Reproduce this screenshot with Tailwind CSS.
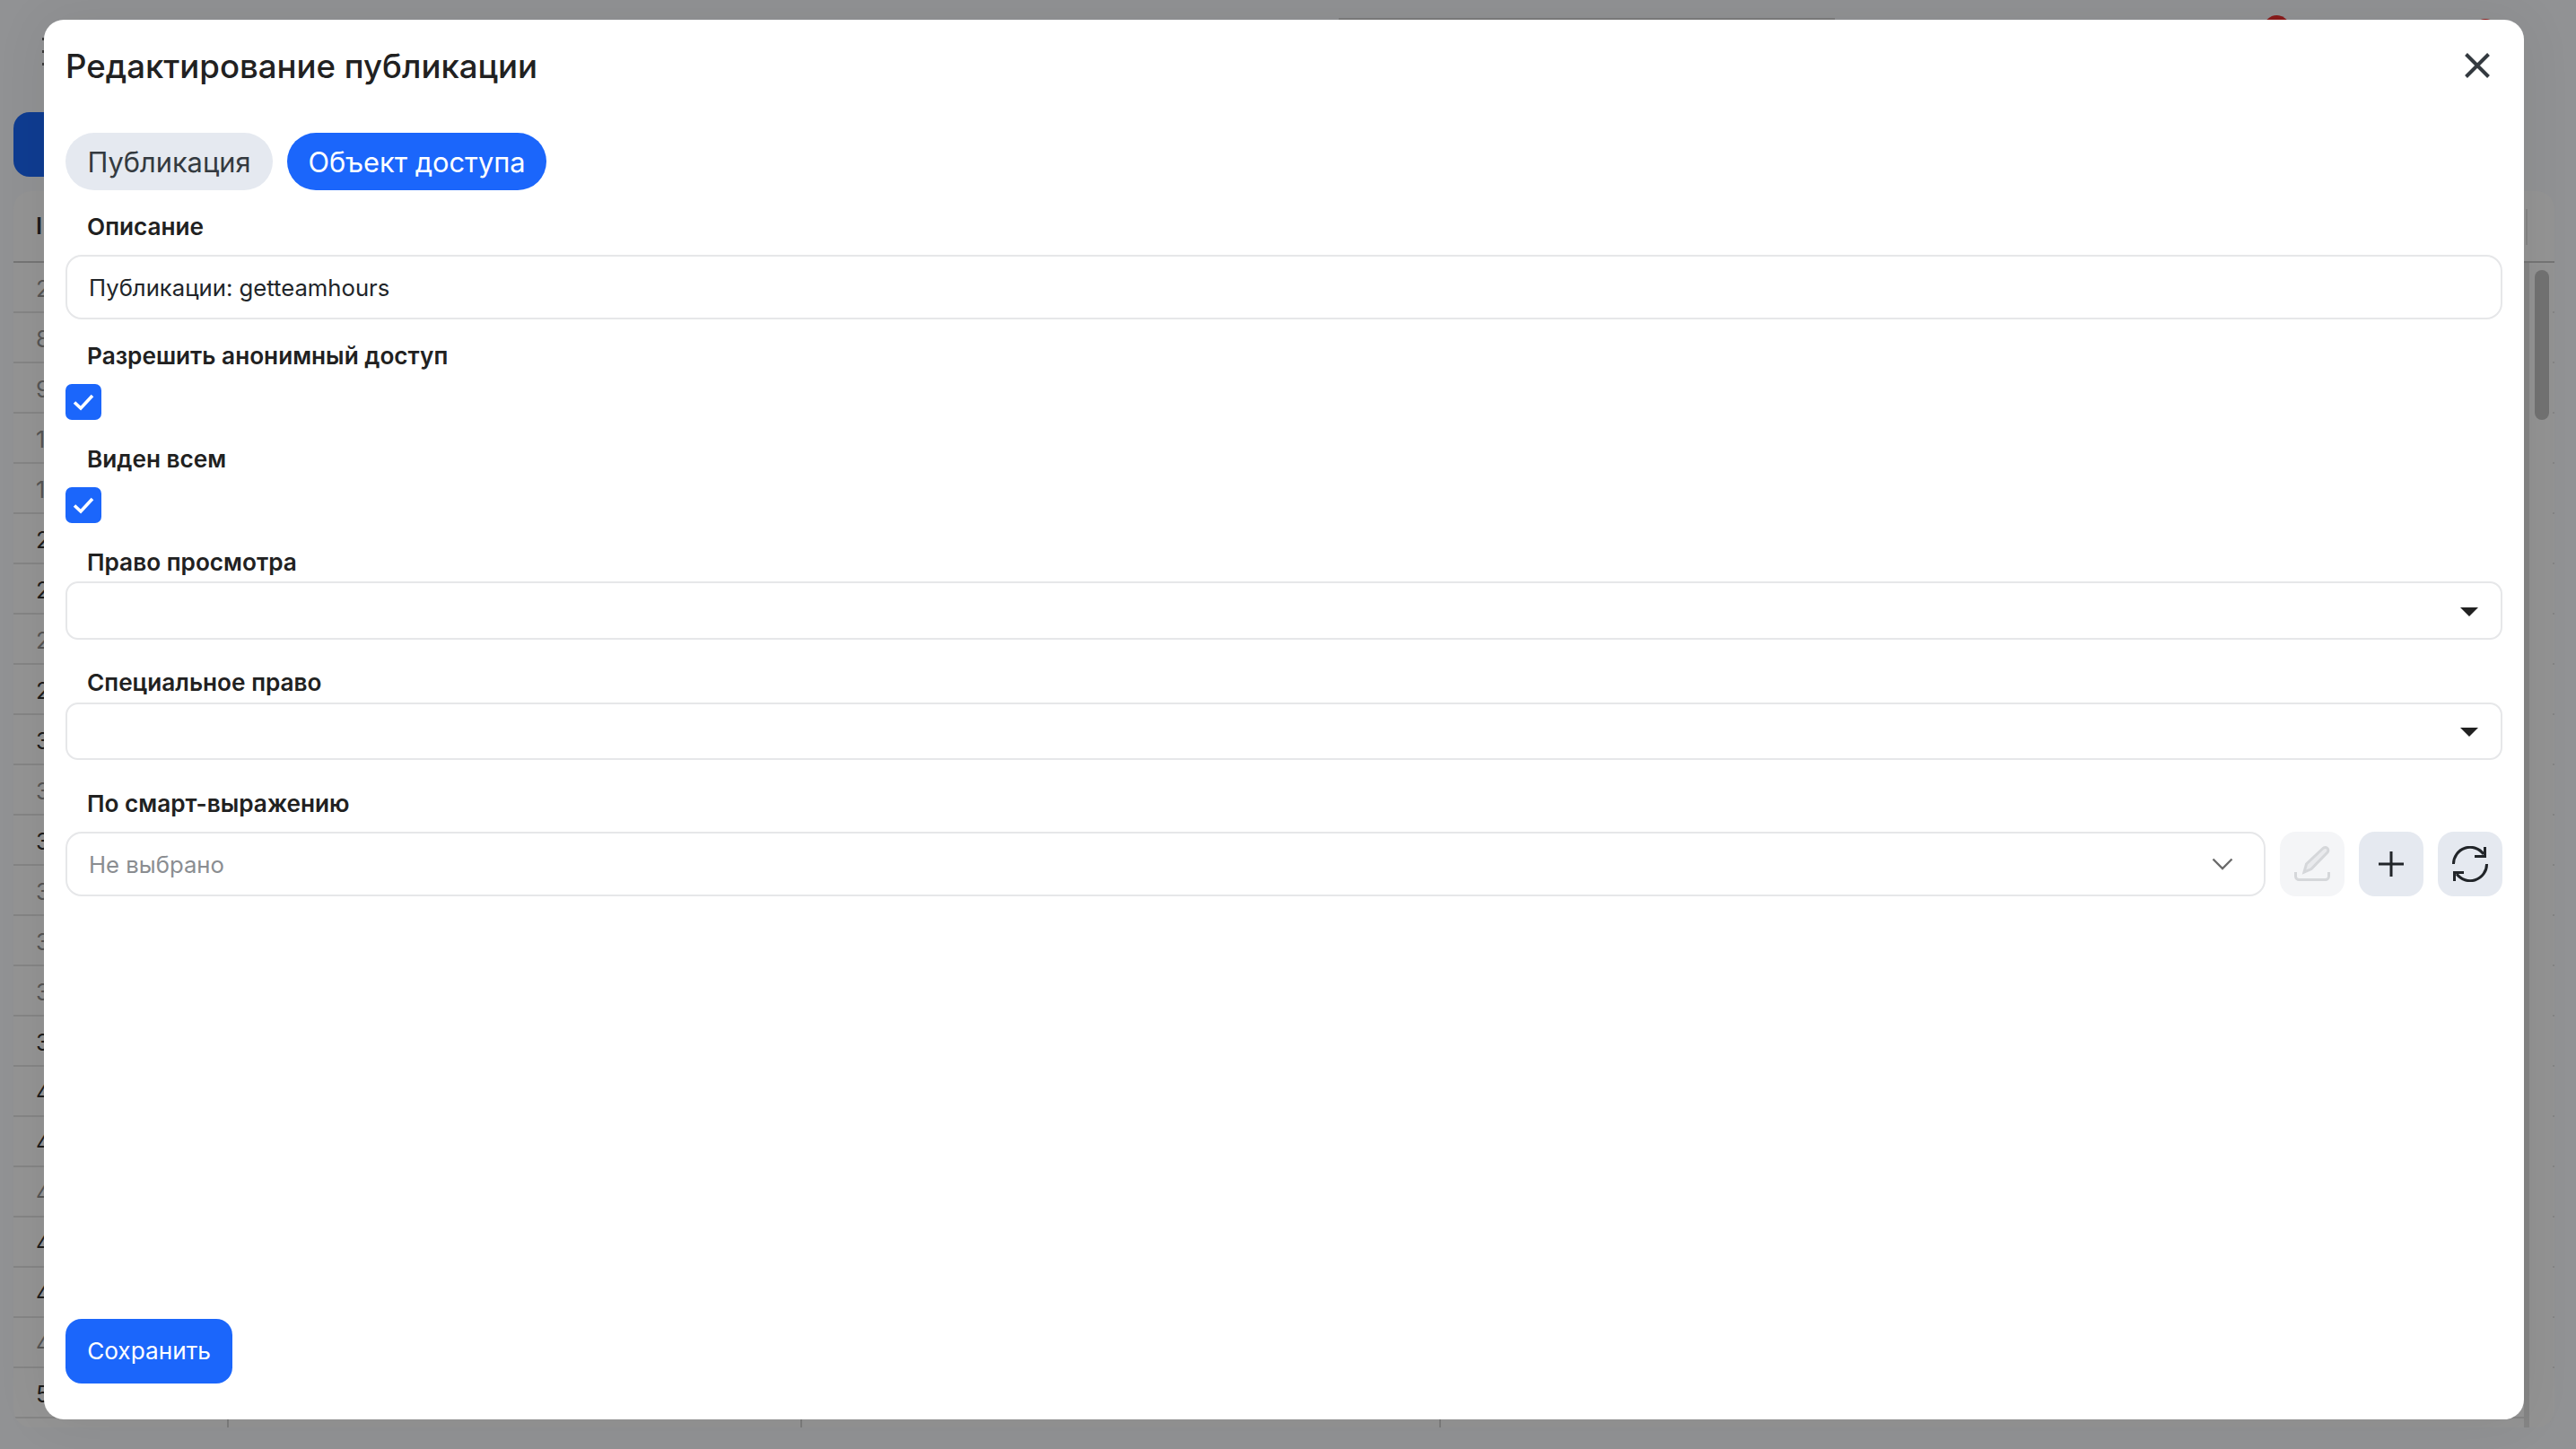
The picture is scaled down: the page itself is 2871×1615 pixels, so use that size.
<!DOCTYPE html>
<html lang="ru">
<head>
<meta charset="utf-8">
<title>Редактирование публикации</title>
<script src="https://cdn.jsdelivr.net/npm/@tailwindcss/browser@4"></script>
</head>
<body class="m-0 overflow-hidden font-['Inter','Noto_Sans',sans-serif]">
<div class="relative w-[2871px] h-[1615px] overflow-hidden bg-[#919294]">
  <!-- dimmed page behind the dialog -->
  <div class="absolute left-[1492px] top-[20px] w-[553px] h-[2px] bg-[#7c7c7c]"></div>
  <div class="absolute left-[2523px] top-[17px] w-[29px] h-[29px] rounded-full bg-[#8a1a1a]"></div>
  <div class="absolute left-[2756px] top-[21px] w-[28px] h-[28px] rounded-full bg-[#8a1a1a]"></div>
  <div class="absolute left-[47px] top-[42px] flex flex-col gap-[11px]">
    <span class="block w-[3px] h-[3px] bg-[#3a3a3a]"></span>
    <span class="block w-[3px] h-[3px] bg-[#3a3a3a]"></span>
    <span class="block w-[3px] h-[3px] bg-[#3a3a3a]"></span>
  </div>
  <div class="absolute left-[15px] top-[125px] w-[60px] h-[72px] rounded-[18px] bg-[#0f3c91]"></div>

  <div class="absolute left-[15px] top-[213px] w-[2832px] h-[1378px] rounded-[20px] bg-[#949494] overflow-hidden text-[25.6px] leading-[32px]">
    <div class="h-[80px] border-b-2 border-[#757575] pl-[25px] flex items-center font-semibold text-[#1c1c1c]">I</div>
    <div class="flex flex-col">
      <div class="h-[56px] border-b-2 border-[#858585] pl-[25px] pt-[3px] flex items-center text-[#555]">2</div>
      <div class="h-[56px] border-b-2 border-[#858585] pl-[25px] pt-[3px] flex items-center text-[#555]">8</div>
      <div class="h-[56px] border-b-2 border-[#858585] pl-[25px] pt-[3px] flex items-center text-[#555]">9</div>
      <div class="h-[56px] border-b-2 border-[#858585] pl-[25px] pt-[3px] flex items-center text-[#555]">1</div>
      <div class="h-[56px] border-b-2 border-[#858585] pl-[25px] pt-[3px] flex items-center text-[#555]">1</div>
      <div class="h-[56px] border-b-2 border-[#858585] pl-[25px] pt-[3px] flex items-center text-[#1c1c1c]">2</div>
      <div class="h-[56px] border-b-2 border-[#858585] pl-[25px] pt-[3px] flex items-center text-[#1c1c1c]">2</div>
      <div class="h-[56px] border-b-2 border-[#858585] pl-[25px] pt-[3px] flex items-center text-[#555]">2</div>
      <div class="h-[56px] border-b-2 border-[#858585] pl-[25px] pt-[3px] flex items-center text-[#1c1c1c]">2</div>
      <div class="h-[56px] border-b-2 border-[#858585] pl-[25px] pt-[3px] flex items-center text-[#1c1c1c]">3</div>
      <div class="h-[56px] border-b-2 border-[#858585] pl-[25px] pt-[3px] flex items-center text-[#555]">3</div>
      <div class="h-[56px] border-b-2 border-[#858585] pl-[25px] pt-[3px] flex items-center text-[#1c1c1c]">3</div>
      <div class="h-[56px] border-b-2 border-[#858585] pl-[25px] pt-[3px] flex items-center text-[#555]">3</div>
      <div class="h-[56px] border-b-2 border-[#858585] pl-[25px] pt-[3px] flex items-center text-[#555]">3</div>
      <div class="h-[56px] border-b-2 border-[#858585] pl-[25px] pt-[3px] flex items-center text-[#555]">3</div>
      <div class="h-[56px] border-b-2 border-[#858585] pl-[25px] pt-[3px] flex items-center text-[#1c1c1c]">3</div>
      <div class="h-[56px] border-b-2 border-[#858585] pl-[25px] pt-[3px] flex items-center text-[#1c1c1c]">4</div>
      <div class="h-[56px] border-b-2 border-[#858585] pl-[25px] pt-[3px] flex items-center text-[#1c1c1c]">4</div>
      <div class="h-[56px] border-b-2 border-[#858585] pl-[25px] pt-[3px] flex items-center text-[#555]">4</div>
      <div class="h-[56px] border-b-2 border-[#858585] pl-[25px] pt-[3px] flex items-center text-[#1c1c1c]">4</div>
      <div class="h-[56px] border-b-2 border-[#858585] pl-[25px] pt-[3px] flex items-center text-[#1c1c1c]">4</div>
      <div class="h-[56px] border-b-2 border-[#858585] pl-[25px] pt-[3px] flex items-center text-[#555]">4</div>
      <div class="h-[56px] border-b-2 border-[#858585] pl-[25px] pt-[3px] flex items-center text-[#1c1c1c]">5</div>
    </div>
    <!-- column separators at the foot of the table -->
    <div class="absolute left-[238px] bottom-0 w-[2px] h-[10px] bg-[#7c7c7c]"></div>
    <div class="absolute left-[877px] bottom-0 w-[2px] h-[10px] bg-[#7c7c7c]"></div>
    <div class="absolute left-[1589px] bottom-0 w-[2px] h-[10px] bg-[#7c7c7c]"></div>
    <!-- scrollbar -->
    <div class="absolute left-[2800px] top-[20px] w-[2px] h-[40px] bg-[#858585]"></div>
    <div class="absolute left-[2798px] top-[80px] bottom-0 w-[6px] bg-[#858585]"></div>
    <div class="absolute left-[2804px] top-[82px] bottom-0 w-[26px] bg-[#939393]"></div>
    <div class="absolute left-[2810px] top-[88px] w-[16px] h-[167px] rounded-full bg-[#727272]"></div>
  </div>

  <!-- dialog -->
  <div class="absolute left-[49px] top-[22px] w-[2764px] h-[1560px] rounded-[22px] bg-white shadow-[0_0_60px_rgba(0,0,0,0.07)] px-[24px] pb-[40px] flex flex-col text-[#212529]">
    <div class="h-[104px] flex items-center justify-between shrink-0">
      <h2 class="text-[36.6px] leading-[44px] font-medium text-[#212121]">Редактирование публикации</h2>
      <button class="mr-[14px] mb-[2px] w-[28px] h-[28px] flex items-center justify-center">
        <svg width="28" height="28" viewBox="0 0 28 28" fill="none" stroke="#343a40" stroke-width="4"><path d="M1.5 1.5 26.5 26.5M26.5 1.5 1.5 26.5"/></svg>
      </button>
    </div>
    <div class="flex gap-[16px] mt-[22px] shrink-0">
      <div class="h-[64px] w-[231px] rounded-full bg-[#e5e9f0] text-[#343a40] text-[30.8px] pt-[2px] leading-[62px] text-center">Публикация</div>
      <div class="h-[64px] w-[289px] rounded-full bg-[#1b66fb] text-white text-[30.8px] pt-[2px] leading-[62px] text-center">Объект доступа</div>
    </div>

    <div class="mt-[25px] h-[32px] pl-[24px] flex items-center text-[26.2px] font-semibold text-[#212121]">Описание</div>
    <div class="mt-[15px] h-[72px] rounded-[18px] border-2 border-[#e6e7e9] pl-[24px] pr-[23px] pt-[2px] flex items-center text-[25.7px] text-[#212529]">Публикации: getteamhours</div>

    <div class="mt-[25px] h-[32px] pl-[24px] flex items-center text-[26.2px] font-semibold text-[#212121]">Разрешить анонимный доступ</div>
    <div class="mt-[15px] w-[40px] h-[40px] rounded-[7px] bg-[#1b66fb] flex items-center justify-center">
      <svg width="24" height="20" viewBox="0 0 24 20" fill="none" stroke="#fff" stroke-width="3.6"><path d="M2 10.5 9 17 22 3"/></svg>
    </div>

    <div class="mt-[28px] h-[32px] pl-[24px] flex items-center text-[26.2px] font-semibold text-[#212121]">Виден всем</div>
    <div class="mt-[15px] w-[40px] h-[40px] rounded-[7px] bg-[#1b66fb] flex items-center justify-center">
      <svg width="24" height="20" viewBox="0 0 24 20" fill="none" stroke="#fff" stroke-width="3.6"><path d="M2 10.5 9 17 22 3"/></svg>
    </div>

    <div class="mt-[28px] h-[32px] pl-[24px] flex items-center text-[26.2px] font-semibold text-[#212121]">Право просмотра</div>
    <div class="mt-[5px] h-[65px] rounded-[14px] border-2 border-[#e6e7e9] pr-[25px] pt-[2px] flex items-center justify-end">
      <svg width="20" height="10" viewBox="0 0 20 10" fill="#212121"><path d="M0 0H20L10 10Z"/></svg>
    </div>

    <div class="mt-[32px] h-[32px] pl-[24px] flex items-center text-[26.2px] font-semibold text-[#212121]">Специальное право</div>
    <div class="mt-[6px] h-[64px] rounded-[14px] border-2 border-[#e6e7e9] pr-[25px] pt-[2px] flex items-center justify-end">
      <svg width="20" height="10" viewBox="0 0 20 10" fill="#212121"><path d="M0 0H20L10 10Z"/></svg>
    </div>

    <div class="mt-[33px] h-[32px] pl-[24px] flex items-center text-[26.2px] font-semibold text-[#212121]">По смарт-выражению</div>
    <div class="mt-[15px] flex gap-[16px]">
      <div class="flex-1 h-[72px] rounded-[18px] border-2 border-[#e6e7e9] pl-[24px] pr-[34px] flex items-center justify-between text-[25.7px] text-[#8a8d91]">
        <span class="pt-[2px]">Не выбрано</span>
        <svg width="24" height="14" viewBox="0 0 24 14" fill="none" stroke="#6b6b6b" stroke-width="2.4"><path d="M1.5 1.5 12 12 22.5 1.5"/></svg>
      </div>
      <button class="w-[72px] h-[72px] rounded-[18px] bg-[#f4f5f7] flex items-center justify-center">
        <svg width="42" height="42" viewBox="0 0 42 42" fill="none" stroke="#d5d7da" stroke-width="3"><path d="M12 30 14.5 21 33 3.5a3.2 3.2 0 0 1 5 4.5L20 26.5Z" fill="#d5d7da" fill-opacity=".35"/><path d="M2.5 30v4.5a4 4 0 0 0 4 4h29a4 4 0 0 0 4-4V30"/></svg>
      </button>
      <button class="w-[72px] h-[72px] rounded-[18px] bg-[#e5e9f0] flex items-center justify-center">
        <svg width="28" height="28" viewBox="0 0 28 28" fill="none" stroke="#212529" stroke-width="3"><path d="M14 0V28M0 14H28"/></svg>
      </button>
      <button class="w-[72px] h-[72px] rounded-[18px] bg-[#e5e9f0] flex items-center justify-center">
        <svg width="40" height="40" viewBox="0 0 40 40" fill="none" stroke="#212529" stroke-width="3"><path d="M1.5 20A18.5 18.5 0 0 1 35 9M25 11.5H36.5V1M38.5 20A18.5 18.5 0 0 1 5 31M13 29.5H2.5V39"/></svg>
      </button>
    </div>

    <button class="mt-auto w-[186px] h-[72px] rounded-[18px] bg-[#1b66fb] text-white text-[26.2px] flex items-center justify-center shrink-0">Сохранить</button>
  </div>
</div>
</body>
</html>
